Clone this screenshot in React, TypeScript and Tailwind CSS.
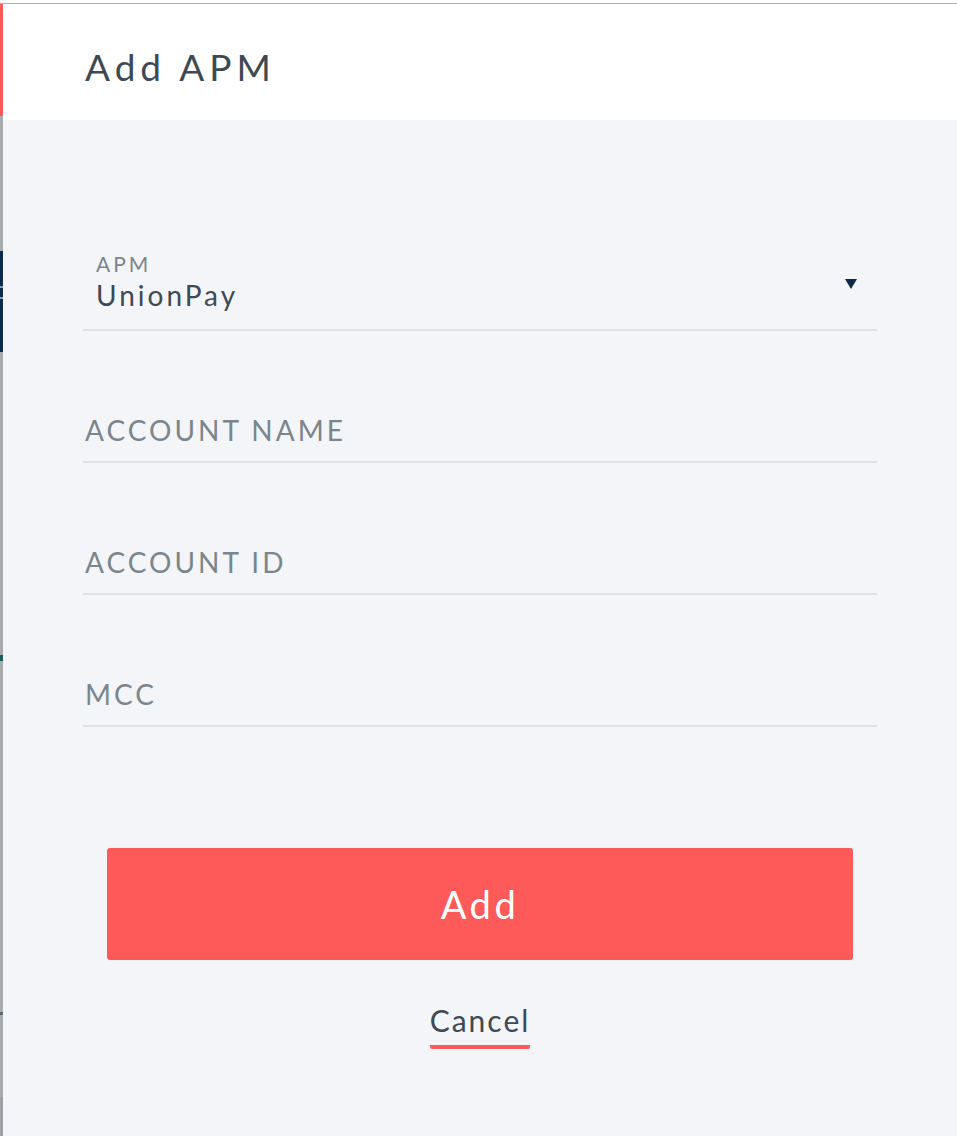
const font = { fontFamily: "Lato, 'Open Sans', sans-serif" };

const Field = ({ label }: { label: string }) => (
  <div className="flex h-[132px] flex-col justify-end">
    <div className="border-b-2 border-[#dde0e5] px-[2px] pb-[10px]">
      <p className="text-[28px] tracking-[3px] text-[#7a858c]">{label}</p>
    </div>
  </div>
);

export default function App() {
  return (
    <div className="flex h-[1136px] w-[957px] flex-col bg-white" style={font}>
      <div className="h-[3px] bg-white" />
      <div className="h-px bg-[#b3b3b3]" />
      <div className="flex flex-1">
        {/* page peeking out behind the drawer */}
        <div className="flex w-[3px] flex-col bg-[#a9acaf]">
          <div className="h-[112px] bg-[#ff5a5a]" />
          <div className="h-[135px]" />
          <div className="flex h-[101px] flex-col bg-[#0d2a4a]">
            <div className="mt-[35px] h-[2px] bg-[#8c9bab]" />
            <div className="mt-[9px] h-[2px] bg-[#8c9bab]" />
          </div>
          <div className="h-[303px]" />
          <div className="h-[6px] bg-[#1a5f5a]" />
          <div className="h-[351px]" />
          <div className="h-[3px] bg-[#5c6570]" />
          <div className="h-[82px]" />
          <div className="flex-1 bg-[#9da1a6]" />
        </div>

        <div className="flex flex-1 flex-col">
          <header className="flex h-[116px] items-center bg-white pl-[82px] pt-[10px]">
            <h1 className="text-[37px] tracking-[5px] text-[#3d4a53]">Add APM</h1>
          </header>

          <main className="flex flex-1 flex-col bg-[#f3f5f9] pl-[80px] pr-[80px]">
            <div className="flex h-[211px] flex-col justify-end">
              <div className="flex items-start justify-between border-b-2 border-[#dde0e5] px-[13px] pb-[16px]">
                <div className="flex flex-col">
                  <span className="text-[21px] leading-[18px] tracking-[3px] text-[#7a858c]">APM</span>
                  <span className="mt-[4px] text-[28px] leading-[36px] tracking-[3px] text-[#3d4a53]">UnionPay</span>
                </div>
                <svg width="12" height="10" viewBox="0 0 12 10" className="mt-[24px] mr-[7px]">
                  <path d="M0 0 H12 L6 10 Z" fill="#0d2a4a" />
                </svg>
              </div>
            </div>

            <Field label="ACCOUNT NAME" />
            <Field label="ACCOUNT ID" />
            <Field label="MCC" />

            <div className="mt-[121px] px-[24px]">
              <button className="flex h-[112px] w-full items-center justify-center rounded-[3px] bg-[#ff5a5a] text-[38px] tracking-[3.5px] text-white">
                Add
              </button>
            </div>

            <div className="mt-[42px] flex justify-center">
              <span className="rounded-b-[2px] border-b-[4px] border-[#ff5a5a] pb-[7px] text-[30px] leading-[36px] tracking-[2px] text-[#3d4a53]">
                Cancel
              </span>
            </div>
          </main>
        </div>
      </div>
    </div>
  );
}
